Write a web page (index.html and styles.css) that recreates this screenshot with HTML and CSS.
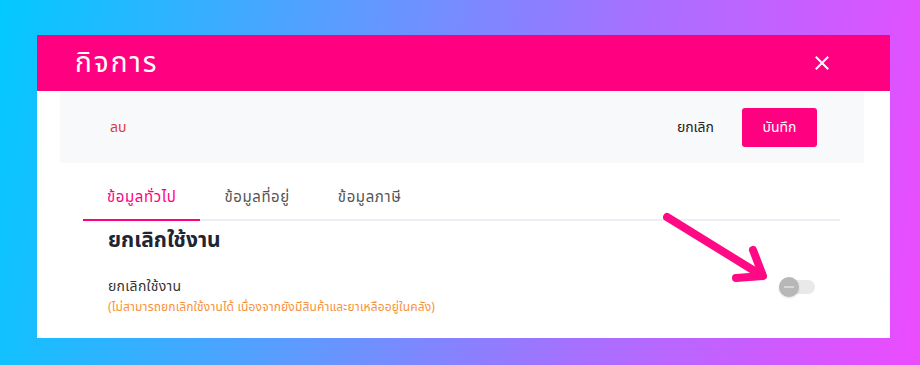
FILE: index.html
```html
<!DOCTYPE html>
<html lang="th">
<head>
    <meta charset="UTF-8">
    <meta name="viewport" content="width=device-width, initial-scale=1.0">
    <title>กิจการ</title>
    <link rel="stylesheet" href="styles.css">
</head>
<body>
    <div class="stage">
        <div class="modal">
            <div class="modal-header">
                <h1 class="modal-title">กิจการ</h1>
                <button type="button" class="close-button" aria-label="ปิด">
                    <svg width="14" height="14" viewBox="0 0 14 14">
                        <path d="M1.5 1.5 L12.5 12.5 M12.5 1.5 L1.5 12.5" stroke="#fff" stroke-width="2" stroke-linecap="square"/>
                    </svg>
                </button>
            </div>
            <div class="toolbar">
                <button type="button" class="delete-button">ลบ</button>
                <div class="toolbar-actions">
                    <button type="button" class="cancel-button">ยกเลิก</button>
                    <button type="button" class="save-button">บันทึก</button>
                </div>
            </div>
            <div class="tabs">
                <div class="tab active">ข้อมูลทั่วไป</div>
                <div class="tab">ข้อมูลที่อยู่</div>
                <div class="tab">ข้อมูลภาษี</div>
            </div>
            <div class="section">
                <h2 class="section-title">ยกเลิกใช้งาน</h2>
                <div class="setting-row">
                    <div class="setting-text">
                        <div class="setting-label">ยกเลิกใช้งาน</div>
                        <div class="setting-note">(ไม่สามารถยกเลิกใช้งานได้ เนื่องจากยังมีสินค้าและยาเหลืออยู่ในคลัง)</div>
                    </div>
                    <div class="toggle disabled">
                        <span class="toggle-knob"></span>
                    </div>
                </div>
            </div>

            <!-- annotation arrow pointing at the toggle -->
            <svg class="pointer-arrow" width="120" height="80" viewBox="0 0 120 80">
                <path d="M4 6 L98 64" stroke="#ff0a84" stroke-width="8" stroke-linecap="round" fill="none"/>
                <path d="M90 39 L100 65 L73 67" stroke="#ff0a84" stroke-width="8" stroke-linecap="round" stroke-linejoin="round" fill="none"/>
            </svg>
        </div>
    </div>
</body>
</html>
```

FILE: styles.css
```css
body {
    margin: 0;
    padding: 0;
    height: 365px;
    overflow: hidden;
    font-family: "Noto Sans", "Noto Sans Thai", sans-serif;
    background: linear-gradient(100deg, #02c9ff 0%, #5a9cff 35%, #a670ff 65%, #ec4bff 100%);
}
.stage {
    padding: 35px 30px 0 37px;
}
.modal {
    position: relative;
    width: 853px;
    height: 303px;
    background-color: #fff;
}
.modal-header {
    display: flex;
    align-items: center;
    justify-content: space-between;
    height: 56px;
    padding: 0 61px 0 38px;
    background-color: #ff0080;
}
.modal-title {
    margin: 0;
    color: #fff;
    font-size: 28px;
    font-weight: 400;
    letter-spacing: 2px;
}
.close-button {
    display: flex;
    padding: 0;
    border: none;
    background: none;
    cursor: pointer;
}
.toolbar {
    display: flex;
    align-items: center;
    justify-content: space-between;
    height: 71px;
    margin: 1px 26px 0 23px;
    padding: 0 47px 0 50px;
    background-color: #f8f9fb;
}
.toolbar button {
    font-family: inherit;
    font-size: 14px;
    border: none;
    cursor: pointer;
}
.delete-button {
    padding: 0;
    background: none;
    color: #d9383a;
}
.toolbar-actions {
    display: flex;
    align-items: center;
    gap: 28px;
}
.cancel-button {
    padding: 0;
    background: none;
    color: #222;
}
.save-button {
    width: 75px;
    height: 39px;
    border-radius: 3px;
    background-color: #ff0080;
    color: #fff;
}
.tabs {
    display: flex;
    height: 56px;
    margin: 0 50px 0 46px;
    border-bottom: 2px solid #eeeef4;
}
.tab {
    display: flex;
    align-items: center;
    padding: 13px 24px 0;
    margin-bottom: -2px;
    font-size: 15px;
    letter-spacing: 0.6px;
    color: #555;
    border-bottom: 2px solid transparent;
}
.tab.active {
    color: #ff0080;
    border-bottom-color: #ff0080;
}
.section {
    padding: 0 75px 0 71px;
}
.section-title {
    margin: 4px 0 0;
    font-size: 21px;
    font-weight: 700;
    color: #1f2533;
}
.setting-row {
    display: flex;
    align-items: flex-start;
    justify-content: space-between;
    margin-top: 20px;
}
.setting-label {
    font-size: 14px;
    letter-spacing: 0.3px;
    color: #333;
}
.setting-note {
    margin-top: 1px;
    font-size: 12px;
    letter-spacing: 0.15px;
    color: #f7923a;
}
.toggle {
    position: relative;
    width: 36px;
    height: 14px;
    margin-top: 4px;
    border-radius: 7px;
    background-color: #e9e9e9;
}
.toggle-knob {
    position: absolute;
    left: 0;
    top: -3px;
    width: 20px;
    height: 20px;
    border-radius: 50%;
    background-color: #b7b7b7;
    box-shadow: 0 1px 2px rgba(0, 0, 0, 0.15);
}
.toggle-knob::after {
    content: "";
    position: absolute;
    left: 5px;
    top: 9px;
    width: 10px;
    height: 2px;
    background-color: #d6d6d6;
}
.pointer-arrow {
    position: absolute;
    left: 626px;
    top: 176px;
}
```
